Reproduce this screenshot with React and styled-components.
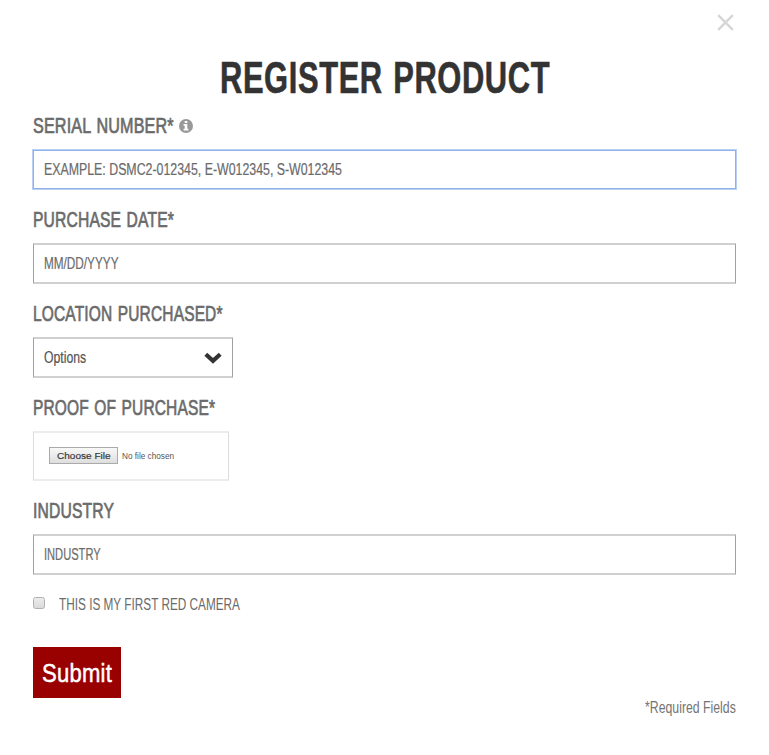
import React, { useLayoutEffect, useRef, useState } from "react";
import styled, { createGlobalStyle } from "styled-components";

const GlobalStyle = createGlobalStyle`
  * {
    box-sizing: border-box;
  }

  body {
    margin: 0;
    background: #fff;
    font-family: "Liberation Sans", Arial, sans-serif;
    color: #6b6b6b;
  }
`;

const Modal = styled.div`
  position: relative;
  display: flex;
  flex-direction: column;
  min-height: 755px;
  padding: 52px 33px 0;
`;

const CloseButton = styled.button`
  position: absolute;
  top: 14px;
  right: 35px;
  width: 17px;
  height: 17px;
  padding: 0;
  border: 0;
  background: none;

  svg {
    display: block;
  }
`;

const Title = styled.h1`
  display: flex;
  justify-content: center;
  margin: 0 0 11px;
  padding-top: 1px;
  font-size: 43.5px;
  line-height: 51px;
  height: 50px;
  font-weight: bold;
  letter-spacing: 0.02em;
  word-spacing: 0.04em;
  color: #333;
  -webkit-text-stroke: 0.6px #333;
`;

const Form = styled.form`
  display: flex;
  flex-direction: column;
  align-items: flex-start;
  gap: 17px;
`;

const Field = styled.div`
  display: flex;
  flex-direction: column;
  align-items: flex-start;
  gap: 12px;
  width: 100%;
`;

const Label = styled.label`
  display: flex;
  align-items: center;
  gap: 5px;
  height: 24px;
  padding-top: 1px;
  font-size: 21.3px;
  line-height: 24px;
  letter-spacing: 0.01em;
  word-spacing: 0.06em;
  -webkit-text-stroke: 0.7px #6b6b6b;

  svg {
    margin-top: 1px;
  }
`;

const Box = styled.div`
  display: flex;
  align-items: center;
  width: ${(p) => p.$width || "100%"};
  height: ${(p) => p.$height || "41px"};
  border: solid ${(p) => (p.$light ? "#ececec" : "#d0d0d0")};
  border-width: 2px 1px;
  border-left-color: ${(p) => (p.$light ? "#dcdcdc" : "#a0a0a0")};
  border-right-color: ${(p) => (p.$light ? "#dcdcdc" : "#a0a0a0")};
  padding: 1px 10px 0;
  overflow: hidden;

  &:has(input[data-active="true"]) {
    border: 1px solid #8fb1ea;
    box-shadow: 0 0 0 1px #b9d0f5;
    height: 39px;
    margin: 1px 0;
  }
`;

const Input = styled.input`
  flex: none;
  width: ${(p) => 100 / p.$scale}%;
  padding: 0;
  border: 0;
  outline: 0;
  background: none;
  font-family: inherit;
  font-size: 16px;
  color: #6b6b6b;
  transform: scaleX(${(p) => p.$scale});
  transform-origin: left;

  &::placeholder {
    color: #6b6b6b;
    opacity: 1;
    -webkit-text-stroke: 0.2px #6b6b6b;
  }
`;

const Select = styled.div`
  display: flex;
  flex: 1;
  align-items: center;
  justify-content: space-between;
  font-size: 16px;
  color: #555;
  -webkit-text-stroke: 0.2px #555;
`;

const FileRow = styled.div`
  display: flex;
  align-items: center;
  padding: 0 0 2px 5px;
`;

const FileButton = styled.button`
  display: flex;
  align-items: center;
  justify-content: center;
  width: 69px;
  height: 17px;
  padding: 0;
  border: 1px solid #aaa;
  background: linear-gradient(#f8f8f8, #dedede);
  font-family: inherit;
  font-size: 9.7px;
  color: #333;
  -webkit-text-stroke: 0.15px #333;
`;

const FileName = styled.span`
  margin-left: 4px;
  font-size: 9.8px;
  color: #555;
`;

const CheckRow = styled.label`
  display: flex;
  align-items: center;
  gap: 14px;
  height: 24px;
  font-size: 16.3px;
`;

const Checkbox = styled.input`
  appearance: none;
  width: 12px;
  height: 12px;
  margin: -3px 0 0;
  border: 1px solid #b0b0b0;
  border-radius: 2.5px;
  background: linear-gradient(#ececec, #dadada);
`;

const Submit = styled.button`
  display: flex;
  align-items: center;
  justify-content: center;
  width: 88px;
  height: 51px;
  margin-top: 14px;
  padding: 2px 0 0;
  border: 0;
  background: #900;
  font-family: inherit;
  font-size: 26.5px;
  letter-spacing: 0.01em;
  color: #fff;
  -webkit-text-stroke: 0.5px #fff;
`;

const Required = styled.div`
  display: flex;
  justify-content: flex-end;
  height: 20px;
  font-size: 15.8px;
  line-height: 20px;
  color: #747474;
`;

const FitBox = styled.span`
  display: inline-block;
  width: ${(p) => p.$width}px;
  white-space: nowrap;
  text-align: left;

  span {
    display: inline-block;
    transform-origin: left;
  }
`;

// condenses a line of text to the given width
const Condensed = ({ width, children }) => {
  const ref = useRef(null);
  const [scale, setScale] = useState(1);

  useLayoutEffect(() => {
    setScale(width / ref.current.offsetWidth);
  }, [width, children]);

  return (
    <FitBox $width={width}>
      <span ref={ref} style={{ transform: `scaleX(${scale})` }}>
        {children}
      </span>
    </FitBox>
  );
};

const CloseIcon = () => (
  <svg width="17" height="17" viewBox="0 0 17 17" stroke="#d6d6d6" strokeWidth="2.4">
    <path d="M1.2 1.2 15.8 15.8M15.8 1.2 1.2 15.8" />
  </svg>
);

const InfoIcon = () => (
  <svg width="14" height="14" viewBox="0 0 14 14">
    <circle cx="7" cy="7" r="7" fill="#999" />
    <path fill="#fff" d="M5.7 2h2.6v2H5.7zM4.6 5h3.7v4.8h1.1v1.7H4.6V9.8h1.1V6.7H4.6z" />
  </svg>
);

const ChevronIcon = () => (
  <svg width="18" height="12" viewBox="0 0 18 12" fill="none" stroke="#333" strokeWidth="4.2">
    <path d="M1.8 2.2 9 8.8 16.2 2.2" />
  </svg>
);

const TextField = ({ label, labelWidth, placeholder, scale, active, icon }) => (
  <Field>
    <Label>
      <Condensed width={labelWidth}>{label}</Condensed>
      {icon}
    </Label>
    <Box>
      <Input type="text" placeholder={placeholder} $scale={scale} data-active={active} />
    </Box>
  </Field>
);

const App = () => {
  return (
    <React.Fragment>
      <GlobalStyle />
      <Modal>
        <CloseButton type="button" aria-label="Close">
          <CloseIcon />
        </CloseButton>
        <Title>
          <Condensed width={330}>REGISTER PRODUCT</Condensed>
        </Title>
        <Form>
          <TextField
            label="SERIAL NUMBER*"
            labelWidth={141}
            placeholder="EXAMPLE: DSMC2-012345, E-W012345, S-W012345"
            scale={0.772}
            icon={<InfoIcon />}
            active
          />
          <TextField label="PURCHASE DATE*" labelWidth={141} placeholder="MM/DD/YYYY" scale={0.735} />
          <Field>
            <Label>
              <Condensed width={190}>LOCATION PURCHASED*</Condensed>
            </Label>
            <Box $width="200px">
              <Select>
                <Condensed width={42}>Options</Condensed>
                <ChevronIcon />
              </Select>
            </Box>
          </Field>
          <Field>
            <Label>
              <Condensed width={182}>PROOF OF PURCHASE*</Condensed>
            </Label>
            <Box $width="196px" $height="50px" $light>
              <FileRow>
                <FileButton type="button">
                  <Condensed width={54}>Choose File</Condensed>
                </FileButton>
                <FileName>
                  <Condensed width={52}>No file chosen</Condensed>
                </FileName>
              </FileRow>
            </Box>
          </Field>
          <TextField label="INDUSTRY" labelWidth={81} placeholder="INDUSTRY" scale={0.695} />
          <CheckRow>
            <Checkbox type="checkbox" />
            <Condensed width={181}>THIS IS MY FIRST RED CAMERA</Condensed>
          </CheckRow>
          <Submit type="button">
            <Condensed width={70}>Submit</Condensed>
          </Submit>
        </Form>
        <Required>
          <Condensed width={91}>*Required Fields</Condensed>
        </Required>
      </Modal>
    </React.Fragment>
  );
};

export default App;
